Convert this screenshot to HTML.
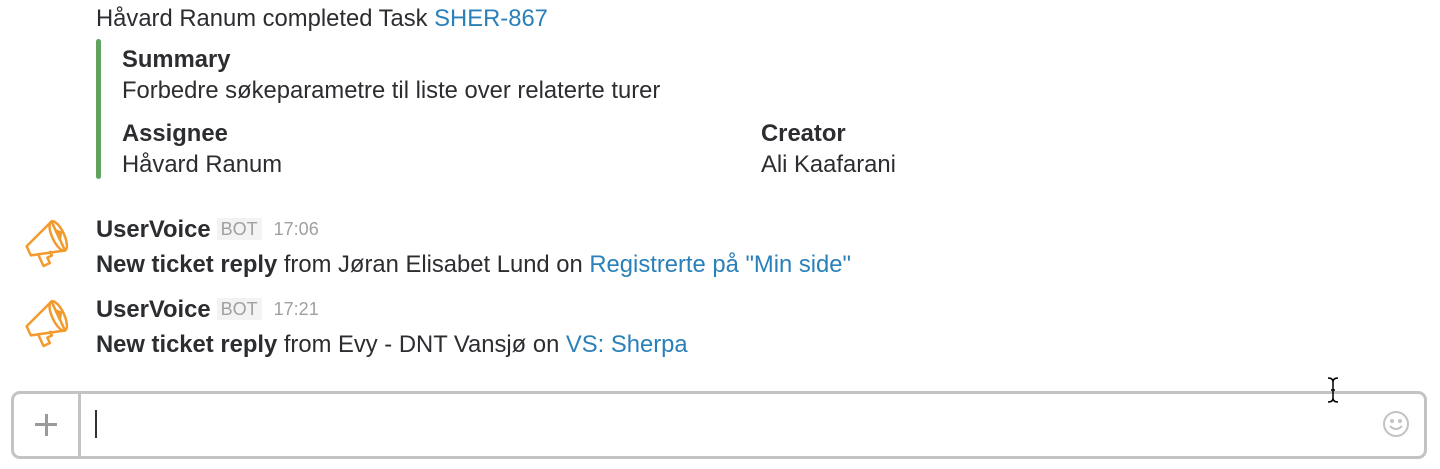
<!DOCTYPE html>
<html><head><meta charset="utf-8"><style>
body{margin:0;width:1440px;height:469px;background:#fff;font-family:"Liberation Sans",sans-serif;color:#2c2d30;position:relative;overflow:hidden;font-size:23.8px}
.t{position:absolute;white-space:nowrap;line-height:26px}
a{color:#2a80b9;text-decoration:none}
b{font-weight:bold}
.bar{position:absolute;left:96px;top:39px;width:5px;height:140px;background:#5fa35f;border-radius:3px}
.bot{font-size:18px;color:#a0a0a2;background:#f3f3f3;padding:1px 4px;margin-left:6px;vertical-align:2px}
.time{font-size:18px;color:#a0a0a2;margin-left:12px;vertical-align:2px}
.box{position:absolute;left:11px;top:391px;width:1410px;height:62px;border:3px solid #c3c3c5;border-radius:9px}
</style></head><body>
<div class="t" style="left:96px;top:6px">Håvard Ranum completed Task <a>SHER-867</a></div>
<div class="bar"></div>
<div class="t" style="left:122px;top:47px"><b>Summary</b></div>
<div class="t" style="left:122px;top:78px">Forbedre søkeparametre til liste over relaterte turer</div>
<div class="t" style="left:122px;top:121px"><b>Assignee</b></div>
<div class="t" style="left:122px;top:152px">Håvard Ranum</div>
<div class="t" style="left:761px;top:121px"><b>Creator</b></div>
<div class="t" style="left:761px;top:152px">Ali Kaafarani</div>

<svg style="position:absolute;left:22px;top:214px" width="56" height="56" viewBox="0 0 56 56" fill="none" stroke="#f39a2c" stroke-width="2.5" stroke-linejoin="round" stroke-linecap="round">
<g transform="rotate(-25 28 28)"><path d="M5 22 L38 10 L38 42 L5 32 Z"/><ellipse cx="38" cy="26" rx="6" ry="16"/><path d="M12 34 L12 47 L19 47 L19 41 L24 41 L24 37"/><path d="M38 20 L42 24 L38 30 Z" fill="#f39a2c"/></g>
</svg>
<div class="t" style="left:96px;top:216px"><b>UserVoice</b><span class="bot">BOT</span><span class="time">17:06</span></div>
<div class="t" style="left:96px;top:252px"><b>New ticket reply</b> from Jøran Elisabet Lund on <a>Registrerte på "Min side"</a></div>

<svg style="position:absolute;left:22px;top:294px" width="56" height="56" viewBox="0 0 56 56" fill="none" stroke="#f39a2c" stroke-width="2.5" stroke-linejoin="round" stroke-linecap="round">
<g transform="rotate(-25 28 28)"><path d="M5 22 L38 10 L38 42 L5 32 Z"/><ellipse cx="38" cy="26" rx="6" ry="16"/><path d="M12 34 L12 47 L19 47 L19 41 L24 41 L24 37"/><path d="M38 20 L42 24 L38 30 Z" fill="#f39a2c"/></g>
</svg>
<div class="t" style="left:96px;top:296px"><b>UserVoice</b><span class="bot">BOT</span><span class="time">17:21</span></div>
<div class="t" style="left:96px;top:332px"><b>New ticket reply</b> from Evy - DNT Vansjø on <a>VS: Sherpa</a></div>

<div class="box"></div>
<div style="position:absolute;left:78px;top:394px;width:3px;height:62px;background:#c3c3c5"></div>
<div style="position:absolute;left:35px;top:423px;width:22px;height:3px;background:#9a9a9c"></div>
<div style="position:absolute;left:44.5px;top:414px;width:3px;height:22px;background:#9a9a9c"></div>
<div style="position:absolute;left:95px;top:410px;width:2px;height:28px;background:#333"></div>
<svg style="position:absolute;left:1382px;top:410px" width="28" height="28" viewBox="0 0 28 28" fill="none" stroke="#c3c3c5" stroke-width="2"><circle cx="14" cy="14" r="12"/><circle cx="10" cy="11" r="1" fill="#c3c3c5"/><circle cx="18" cy="11" r="1" fill="#c3c3c5"/><path d="M8 16 Q14 22 20 16"/></svg>
<svg style="position:absolute;left:1325px;top:376px" width="16" height="28" viewBox="0 0 16 28" fill="none" stroke="#000" stroke-width="1.5"><path d="M3 2 Q8 2 8 6 L8 22 Q8 26 3 26 M13 2 Q8 2 8 6 M8 22 Q8 26 13 26 M6 14 L10 14"/></svg>
</body></html>
